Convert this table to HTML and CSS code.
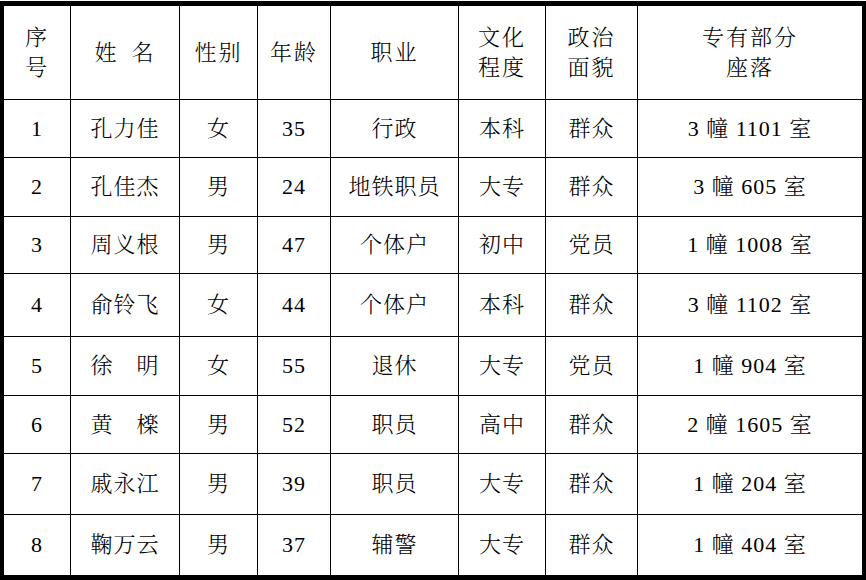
FILE: index.html
```html
<!DOCTYPE html>
<html lang="zh-CN">
<head>
<meta charset="utf-8">
<title>住户信息表</title>
<link rel="stylesheet" href="styles.css">
</head>
<body>
<div class="page">
<table class="sheet">
  <colgroup>
    <col class="c1"><col class="c2"><col class="c3"><col class="c4">
    <col class="c5"><col class="c6"><col class="c7"><col class="c8">
  </colgroup>
  <thead>
    <tr class="r-head">
      <th>序<br>号</th>
      <th>姓&ensp;名</th>
      <th>性别</th>
      <th>年龄</th>
      <th>职业</th>
      <th>文化<br>程度</th>
      <th>政治<br>面貌</th>
      <th>专有部分<br>座落</th>
    </tr>
  </thead>
  <tbody>
    <tr class="r1"><td>1</td><td>孔力佳</td><td>女</td><td>35</td><td>行政</td><td>本科</td><td>群众</td><td>3 幢 1101 室</td></tr>
    <tr class="r2"><td>2</td><td>孔佳杰</td><td>男</td><td>24</td><td>地铁职员</td><td>大专</td><td>群众</td><td>3 幢 605 室</td></tr>
    <tr class="r3"><td>3</td><td>周义根</td><td>男</td><td>47</td><td>个体户</td><td>初中</td><td>党员</td><td>1 幢 1008 室</td></tr>
    <tr class="r4"><td>4</td><td>俞铃飞</td><td>女</td><td>44</td><td>个体户</td><td>本科</td><td>群众</td><td>3 幢 1102 室</td></tr>
    <tr class="r5"><td>5</td><td>徐　明</td><td>女</td><td>55</td><td>退休</td><td>大专</td><td>党员</td><td>1 幢 904 室</td></tr>
    <tr class="r6"><td>6</td><td>黄　檪</td><td>男</td><td>52</td><td>职员</td><td>高中</td><td>群众</td><td>2 幢 1605 室</td></tr>
    <tr class="r7"><td>7</td><td>戚永江</td><td>男</td><td>39</td><td>职员</td><td>大专</td><td>群众</td><td>1 幢 204 室</td></tr>
    <tr class="r8"><td>8</td><td>鞠万云</td><td>男</td><td>37</td><td>辅警</td><td>大专</td><td>群众</td><td>1 幢 404 室</td></tr>
  </tbody>
</table>
</div>
</body>
</html>
```
FILE: styles.css
```css
html, body {
  margin: 0;
  padding: 0;
  background: #ffffff;
}

.page {
  padding-top: 1px;
  width: 866px;
}

.sheet {
  width: 866px;
  table-layout: fixed;
  border-collapse: separate;
  border-spacing: 0;
  border-style: solid;
  border-color: #000;
  border-width: 5px 4px 5px 4px;
  box-sizing: border-box;
  font-family: "Liberation Serif", "Noto Serif CJK SC", "Noto Sans CJK SC", serif;
  font-size: 22px;
  font-weight: 300;
  color: #000;
}

.c1 { width: 67px; }
.c2 { width: 109px; }
.c3 { width: 78px; }
.c4 { width: 73px; }
.c5 { width: 128px; }
.c6 { width: 87px; }
.c7 { width: 92px; }
.c8 { width: 224px; }

.sheet th,
.sheet td {
  padding: 0;
  text-align: center;
  vertical-align: middle;
  font-weight: 300;
  letter-spacing: 1px;
  line-height: 30px;
  border-right: 1px solid #000;
  border-bottom: 1px solid #000;
  box-sizing: border-box;
  white-space: nowrap;
}

.sheet th:last-child,
.sheet td:last-child {
  border-right: none;
}

.sheet tbody tr:last-child td {
  border-bottom: none;
}

.sheet th {
  letter-spacing: 2px;
}

.r-head { height: 94px; }
.r1 { height: 58px; }
.r2 { height: 59px; }
.r3 { height: 57px; }
.r4 { height: 63px; }
.r5 { height: 59px; }
.r6 { height: 58px; }
.r7 { height: 61px; }
.r8 { height: 60px; }
```
